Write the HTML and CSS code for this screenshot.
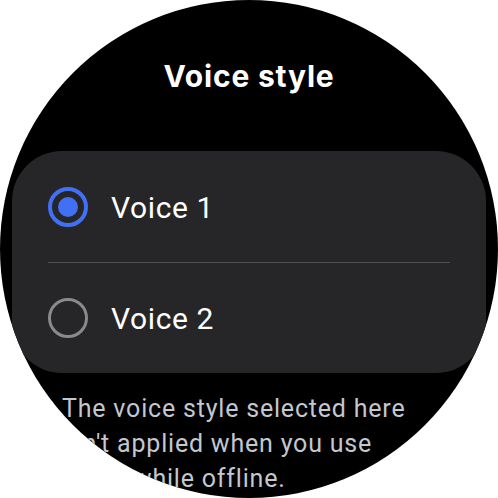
FILE: index.html
```html
<!DOCTYPE html>
<html>
<head>
<meta charset="utf-8">
<link rel="stylesheet" href="styles.css">
</head>
<body>
<div class="watch">
  <h1 class="title">Voice style</h1>
  <div class="card">
    <div class="row">
      <span class="radio checked"><span class="dot"></span></span>
      <span class="label">Voice 1</span>
    </div>
    <div class="divider"></div>
    <div class="row">
      <span class="radio"></span>
      <span class="label">Voice 2</span>
    </div>
  </div>
  <p class="note">The voice style selected here isn't applied when you use Bixby while offline.</p>
</div>
</body>
</html>
```
FILE: styles.css
```css
html, body {
  margin: 0;
  padding: 0;
  background: #ffffff;
}
.watch {
  width: 498px;
  height: 498px;
  border-radius: 50%;
  background: #000000;
  overflow: hidden;
  display: flex;
  flex-direction: column;
  padding-top: 58px;
  box-sizing: border-box;
  font-family: Roboto, "Liberation Sans", sans-serif;
}
.title {
  margin: 0;
  height: 36px;
  line-height: 36px;
  font-family: Inter, Roboto, sans-serif;
  font-size: 30px;
  font-weight: 700;
  letter-spacing: 0.8px;
  color: #ffffff;
  text-align: center;
}
.card {
  margin: 57px 12px 0;
  background: #262628;
  border-radius: 50px;
  padding: 0 36px;
  display: flex;
  flex-direction: column;
}
.row {
  height: 111px;
  display: flex;
  align-items: center;
  gap: 23px;
}
.row + .divider + .row {
  height: 110px;
}
.divider {
  height: 1px;
  background: #505052;
}
.radio {
  width: 40px;
  height: 40px;
  box-sizing: border-box;
  border-radius: 50%;
  border: 3px solid #8a8a8c;
  display: flex;
  align-items: center;
  justify-content: center;
  flex: none;
}
.radio.checked {
  border: 4px solid #4170f5;
}
.dot {
  width: 20px;
  height: 20px;
  border-radius: 50%;
  background: #4170f5;
}
.label {
  font-size: 30px;
  color: #ffffff;
  line-height: 36px;
  padding-top: 2px;
  letter-spacing: 0.6px;
}
.note {
  margin: 18px 62px 0;
  font-size: 25px;
  line-height: 35px;
  letter-spacing: 0.8px;
  color: #c3c7cf;
}
```
